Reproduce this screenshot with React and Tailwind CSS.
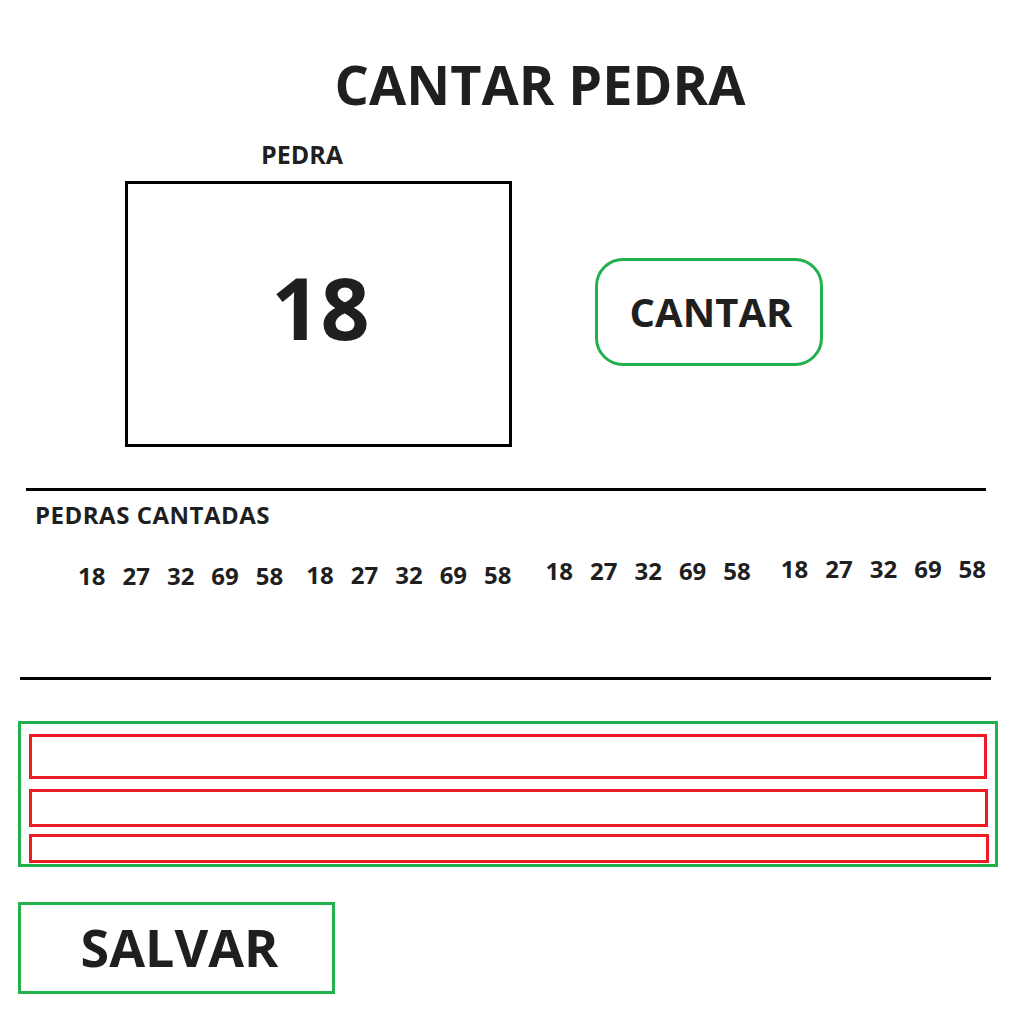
export default function App() {
  const nums = ["18", "27", "32", "69", "58"];
  const Group = ({ className }) => (
    <div className={"flex gap-[17px] " + className}>
      {nums.map((n, i) => (
        <span key={i}>{n}</span>
      ))}
    </div>
  );
  return (
    <div
      className="w-[1024px] h-[1025px] bg-white text-[#1f1f1f] font-bold overflow-hidden"
      style={{ fontFamily: '"Open Sans", "Liberation Sans", sans-serif' }}
    >
      <h1 className="mt-[56px] pl-[56px] text-center text-[54px] leading-[56px] h-[56px]">
        CANTAR PEDRA
      </h1>

      <div className="ml-[125px] mt-[30px]">
        <div className="ml-[136px] text-[25px] leading-[24px] h-[24px]">PEDRA</div>
        <div className="mt-[15px] flex items-start">
          <div className="w-[387px] h-[266px] border-[3px] border-black flex items-center justify-center pb-[14px] pl-[4px]">
            <span className="text-[86px] leading-[86px]">18</span>
          </div>
          <div className="ml-[83px] mt-[77px] w-[228px] h-[108px] border-[3px] border-[#22b14c] rounded-[28px] flex items-center justify-center pl-[4px]">
            <span className="text-[40px] leading-[40px]">CANTAR</span>
          </div>
        </div>
      </div>

      <div className="ml-[26px] mt-[41px] w-[960px] h-[3px] bg-black" />

      <div className="ml-[35px] mt-[12px] text-[24px] leading-[23px] h-[23px] tracking-[0.5px]">
        PEDRAS CANTADAS
      </div>

      <div className="mt-[31px] flex items-start text-[24px] leading-[24px]">
        <Group className="ml-[78px] mt-[7px]" />
        <Group className="ml-[23px] mt-[6px]" />
        <Group className="ml-[34px] mt-[2px]" />
        <Group className="ml-[30px] mt-0" />
      </div>

      <div className="ml-[20px] mt-[89px] w-[971px] h-[3px] bg-black" />

      <div className="ml-[18px] mt-[41px] w-[980px] h-[146px] border-[3px] border-[#22b14c] pt-[10px] pl-[8px] flex flex-col">
        <div className="w-[958px] h-[45px] border-[3px] border-[#ed1c24]" />
        <div className="mt-[10px] w-[959px] h-[38px] border-[3px] border-[#ed1c24]" />
        <div className="mt-[7px] w-[960px] h-[29px] border-[3px] border-[#ed1c24]" />
      </div>

      <div className="ml-[18px] mt-[35px] w-[317px] h-[92px] border-[3px] border-[#22b14c] flex items-center justify-center pl-[6px] pb-[3px]">
        <span className="text-[52px] leading-[52px]">SALVAR</span>
      </div>
    </div>
  );
}
